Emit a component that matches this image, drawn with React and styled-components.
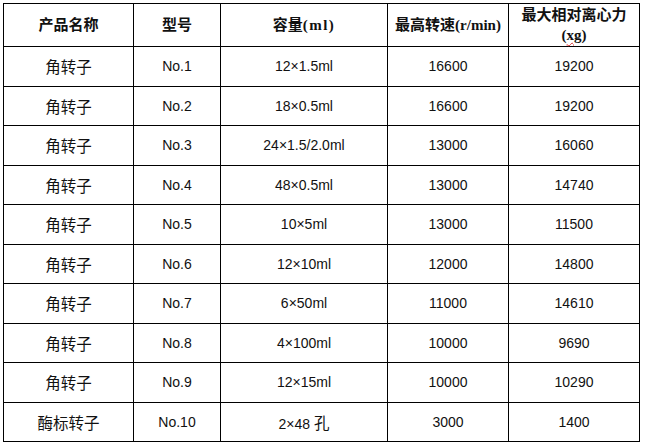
import React from "react";
import styled, { createGlobalStyle } from "styled-components";

const GlobalStyle = createGlobalStyle`
  html, body {
    margin: 0;
    padding: 0;
    background: #ffffff;
  }
`;

const Page = styled.div`
  padding: 3px 0 0 3px;
`;

const Table = styled.table`
  border-collapse: collapse;
  table-layout: fixed;
  width: 637px;
  font-family: "Liberation Sans", "Noto Sans CJK SC", sans-serif;
  font-size: 14px;
  color: #111;
`;

const HeadRow = styled.tr`
  height: 43px;
`;

const Row = styled.tr`
  height: 39.5px;
`;

const HeadCell = styled.th`
  border: 1px solid #000;
  padding: 0;
  text-align: center;
  vertical-align: middle;
  font-family: "Liberation Serif", "Noto Sans CJK SC", serif;
  font-size: 15px;
  font-weight: bold;
  line-height: 20px;
`;

const Unit = styled.span`
  font-size: 15px;
  letter-spacing: ${(p) => p.$spread || 0}px;
`;

const Cell = styled.td`
  border: 1px solid #000;
  padding: 0;
  text-align: center;
  vertical-align: middle;
`;

const Cjk = styled.span`
  font-family: "Noto Sans CJK SC", sans-serif;
  font-size: 15.5px;
`;

const Squiggle = styled.span`
  text-decoration: underline wavy #d33;
  text-decoration-thickness: 1px;
  text-underline-offset: 2px;
`;

const columns = [130, 87, 167, 121, 131];

const rows = [
  ["角转子", "No.1", "12×1.5ml", "16600", "19200"],
  ["角转子", "No.2", "18×0.5ml", "16600", "19200"],
  ["角转子", "No.3", "24×1.5/2.0ml", "13000", "16060"],
  ["角转子", "No.4", "48×0.5ml", "13000", "14740"],
  ["角转子", "No.5", "10×5ml", "13000", "11500"],
  ["角转子", "No.6", "12×10ml", "12000", "14800"],
  ["角转子", "No.7", "6×50ml", "11000", "14610"],
  ["角转子", "No.8", "4×100ml", "10000", "9690"],
  ["角转子", "No.9", "12×15ml", "10000", "10290"],
  ["酶标转子", "No.10", "2×48 孔", "3000", "1400"]
];

// chinese characters get a slightly larger size, like in the original sheet
const renderText = (text) =>
  text.split(/([\u4e00-\u9fff]+)/).map((part, i) =>
    /[\u4e00-\u9fff]/.test(part) ? <Cjk key={i}>{part}</Cjk> : part
  );

const App = () => (
  <Page>
    <GlobalStyle />
    <Table>
      <colgroup>
        {columns.map((w, i) => (
          <col key={i} style={{ width: w }} />
        ))}
      </colgroup>
      <thead>
        <HeadRow>
          <HeadCell>产品名称</HeadCell>
          <HeadCell>型号</HeadCell>
          <HeadCell>
            容量<Unit $spread={1.5}>(ml)</Unit>
          </HeadCell>
          <HeadCell>
            最高转速<Unit>(r/min)</Unit>
          </HeadCell>
          <HeadCell>
            最大相对离心力
            <br />
            (<Squiggle>xg</Squiggle>)
          </HeadCell>
        </HeadRow>
      </thead>
      <tbody>
        {rows.map((row, i) => (
          <Row key={i}>
            {row.map((value, j) => (
              <Cell key={j}>{renderText(value)}</Cell>
            ))}
          </Row>
        ))}
      </tbody>
    </Table>
  </Page>
);

export default App;
